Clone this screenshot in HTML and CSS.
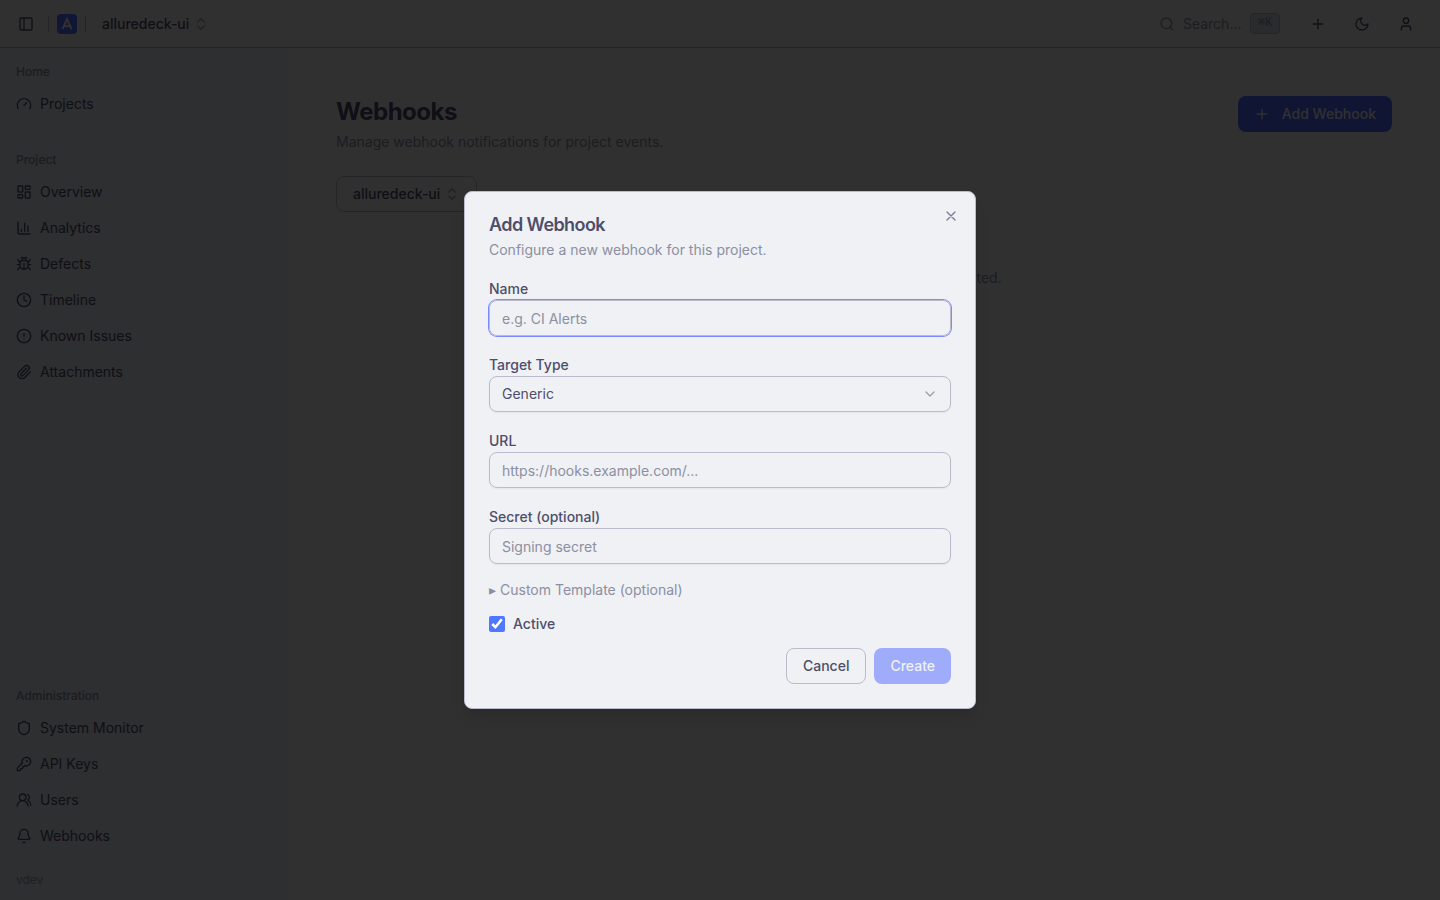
FILE: index.html
```html
<!DOCTYPE html>
<html lang="en">
<head>
<meta charset="utf-8">
<title>Webhooks</title>
<link rel="stylesheet" href="styles.css">
</head>
<body>
<div class="app">
  <header class="topbar">
    <div class="topbar-left">
      <svg class="icon" viewBox="0 0 24 24"><rect width="18" height="18" x="3" y="3" rx="2"/><path d="M9 3v18"/></svg>
      <span class="divider divider-first"></span>
      <span class="logo"><svg viewBox="0 0 20 20"><path d="M5.600 15 10 5l4.400 10M7 12h6"/></svg></span>
      <span class="divider"></span>
      <span class="project-name">alluredeck-ui</span>
      <svg class="icon faint" viewBox="0 0 24 24"><path d="m7 15 5 5 5-5M7 9l5-5 5 5"/></svg>
    </div>
    <div class="topbar-right">
      <div class="search">
        <svg class="icon" viewBox="0 0 24 24"><circle cx="11" cy="11" r="8"/><path d="m21 21-4.300-4.300"/></svg>
        <span>Search...</span><kbd>⌘K</kbd>
      </div>
      <svg class="icon action" viewBox="0 0 24 24"><path d="M5 12h14M12 5v14"/></svg>
      <svg class="icon action" viewBox="0 0 24 24"><path d="M12 3a6 6 0 0 0 9 9 9 9 0 1 1-9-9Z"/></svg>
      <svg class="icon action" viewBox="0 0 24 24"><path d="M19 21v-2a4 4 0 0 0-4-4H9a4 4 0 0 0-4 4v2"/><circle cx="12" cy="7" r="4"/></svg>
    </div>
  </header>
  <div class="body">
    <nav class="sidebar">
      <section class="group">
        <h2 class="group-label">Home</h2>
        <a class="nav-item"><svg class="icon" viewBox="0 0 24 24"><path d="m12 14 4-4M3.340 19a10 10 0 1 1 17.320 0"/></svg>Projects</a>
      </section>
      <section class="group">
        <h2 class="group-label">Project</h2>
        <a class="nav-item"><svg class="icon" viewBox="0 0 24 24"><rect width="7" height="9" x="3" y="3" rx="1"/><rect width="7" height="5" x="14" y="3" rx="1"/><rect width="7" height="9" x="14" y="12" rx="1"/><rect width="7" height="5" x="3" y="16" rx="1"/></svg>Overview</a>
        <a class="nav-item"><svg class="icon" viewBox="0 0 24 24"><path d="M3 3v16a2 2 0 0 0 2 2h16M18 17V9M13 17V5M8 17v-3"/></svg>Analytics</a>
        <a class="nav-item"><svg class="icon" viewBox="0 0 24 24"><path d="M12 20v-9M14 7a4 4 0 0 1 4 4v3a6 6 0 0 1-12 0v-3a4 4 0 0 1 4-4zM14.120 3.880 16 2M21 21a4 4 0 0 0-3.810-4M21 5a4 4 0 0 1-3.550 3.970M22 13h-4M3 21a4 4 0 0 1 3.810-4M3 5a4 4 0 0 0 3.550 3.970M6 13H2M8 2l1.880 1.880M9 7.130V6a3 3 0 1 1 6 0v1.130"/></svg>Defects</a>
        <a class="nav-item"><svg class="icon" viewBox="0 0 24 24"><circle cx="12" cy="12" r="10"/><path d="M12 6v6l4 2"/></svg>Timeline</a>
        <a class="nav-item"><svg class="icon" viewBox="0 0 24 24"><circle cx="12" cy="12" r="10"/><path d="M12 8v4M12 16h.01"/></svg>Known Issues</a>
        <a class="nav-item"><svg class="icon" viewBox="0 0 24 24"><path d="m16 6-8.414 8.586a2 2 0 0 0 2.829 2.829l8.414-8.586a4 4 0 1 0-5.657-5.657l-8.379 8.551a6 6 0 1 0 8.485 8.485l8.379-8.551"/></svg>Attachments</a>
      </section>
      <section class="group group-admin">
        <h2 class="group-label">Administration</h2>
        <a class="nav-item"><svg class="icon" viewBox="0 0 24 24"><path d="M20 13c0 5-3.500 7.500-7.660 8.950a1 1 0 0 1-.67-.01C7.500 20.500 4 18 4 13V6a1 1 0 0 1 1-1c2 0 4.500-1.200 6.240-2.720a1.170 1.170 0 0 1 1.520 0C14.510 3.810 17 5 19 5a1 1 0 0 1 1 1z"/></svg>System Monitor</a>
        <a class="nav-item"><svg class="icon" viewBox="0 0 24 24"><path d="M2.586 17.414A2 2 0 0 0 2 18.828V21a1 1 0 0 0 1 1h3a1 1 0 0 0 1-1v-1a1 1 0 0 1 1-1h1a1 1 0 0 0 1-1v-1a1 1 0 0 1 1-1h.172a2 2 0 0 0 1.414-.586l.814-.814a6.500 6.500 0 1 0-4-4z"/><circle cx="16.500" cy="7.500" r=".5"/></svg>API Keys</a>
        <a class="nav-item"><svg class="icon" viewBox="0 0 24 24"><path d="M18 21a8 8 0 0 0-16 0"/><circle cx="10" cy="8" r="5"/><path d="M22 20c0-3.370-2-6.500-4-8a5 5 0 0 0-.45-8.300"/></svg>Users</a>
        <a class="nav-item"><svg class="icon" viewBox="0 0 24 24"><path d="M10.268 21a2 2 0 0 0 3.464 0M3.262 15.326A1 1 0 0 0 4 17h16a1 1 0 0 0 .74-1.673C19.410 13.956 18 12.499 18 8A6 6 0 0 0 6 8c0 4.499-1.411 5.956-2.738 7.326"/></svg>Webhooks</a>
      </section>
      <footer class="version">vdev</footer>
    </nav>
    <main class="content">
      <div class="page-head">
        <div>
          <h1>Webhooks</h1>
          <p>Manage webhook notifications for project events.</p>
        </div>
        <button class="btn primary add"><svg class="icon" viewBox="0 0 24 24"><path d="M5 12h14M12 5v14"/></svg>Add Webhook</button>
      </div>
      <button class="btn outline picker">alluredeck-ui<svg class="icon faint" viewBox="0 0 24 24"><path d="m7 15 5 5 5-5M7 9l5-5 5 5"/></svg></button>
      <p class="empty">No webhooks yet. Add one to get started.</p>
    </main>
  </div>
</div>
<div class="overlay">
  <form class="dialog">
    <svg class="icon close" viewBox="0 0 24 24"><path d="M18 6 6 18M6 6l12 12"/></svg>
    <div class="dialog-head">
      <h2>Add Webhook</h2>
      <p>Configure a new webhook for this project.</p>
    </div>
    <div class="field"><label>Name</label><input class="control focused" placeholder="e.g. CI Alerts"></div>
    <div class="field"><label>Target Type</label><div class="control select">Generic<svg class="icon" viewBox="0 0 24 24"><path d="m6 9 6 6 6-6"/></svg></div></div>
    <div class="field"><label>URL</label><input class="control" placeholder="https://hooks.example.com/..."></div>
    <div class="field"><label>Secret (optional)</label><input class="control" placeholder="Signing secret"></div>
    <details class="template"><summary><span class="marker">▸</span>Custom Template (optional)</summary></details>
    <label class="active"><input type="checkbox" checked>Active</label>
    <div class="actions">
      <button type="button" class="btn outline">Cancel</button>
      <button type="button" class="btn primary disabled">Create</button>
    </div>
  </form>
</div>
</body>
</html>
```

FILE: styles.css
```css
* { box-sizing: border-box; }
body {
  margin: 0;
  height: 900px;
  overflow: hidden;
  background: #eff1f5;
  color: #4e4e6b;
  font: 14px/20px Inter, sans-serif;
}
h1, h2, p { margin: 0; }
button, input { font: inherit; color: inherit; }
.icon {
  width: 16px;
  height: 16px;
  flex: none;
  fill: none;
  stroke: currentColor;
  stroke-width: 2;
  stroke-linecap: round;
  stroke-linejoin: round;
}
.faint { opacity: .5; }
.app { height: 900px; display: flex; flex-direction: column; }

.topbar {
  height: 48px;
  display: flex;
  align-items: center;
  justify-content: space-between;
  border-bottom: 1px solid #bbbbcd;
  padding: 0 26px 0 18px;
}
.topbar-left, .topbar-right, .search { display: flex; align-items: center; }
.divider { width: 1px; height: 16px; background: #bbbbcd; }
.divider-first { margin: 0 8px 0 14px; }
.logo { width: 20px; height: 20px; border-radius: 4px; background: #4f70ff; margin-right: 8px; }
.logo svg { display: block; fill: none; stroke: #eff1f5; stroke-width: 2; }
.project-name { font-weight: 500; margin: 0 4px 0 16px; }
.search { color: #8c8fa1; gap: 8px; margin-right: 30px; }
.search span { margin-right: .5px; }
kbd {
  height: 21px;
  width: 30px;
  border: 1px solid #bbbbcd;
  border-radius: 4px;
  background: #d2d7df;
  font: 500 12px/19px "Liberation Mono", monospace;
  text-align: center;
}
.action { margin-left: 28px; }
.search + .action { margin-left: 0; }

.body { flex: 1; display: flex; }
.sidebar {
  width: 288px;
  background: #e1e8f0;
  display: flex;
  flex-direction: column;
}
.group { padding: 8px 8px 16px; }
.group-admin { margin-top: auto; padding-bottom: 8px; }
.group-label {
  height: 32px;
  padding: 0 8px;
  color: #8c8fa1;
  font-size: 12px;
  line-height: 32px;
  font-weight: 500;
}
.nav-item {
  height: 32px;
  padding: 0 8px;
  display: flex;
  align-items: center;
  gap: 8px;
}
.nav-item + .nav-item { margin-top: 4px; }
.version { padding: 12px 16px; height: 40px; font-size: 12px; line-height: 16px; color: #9ca0b0; }

.content { flex: 1; padding: 48px; }
.page-head { display: flex; justify-content: space-between; align-items: flex-start; }
h1 { font-size: 24px; line-height: 32px; letter-spacing: -.5px; }
.page-head p { color: #8c8fa1; margin-top: 4px; }
.btn {
  height: 36px;
  padding: 0 16px;
  border-radius: 8px;
  border: 0;
  display: flex;
  align-items: center;
  font-weight: 500;
}
.primary { background: #4f69ff; color: #eff1f5; }
.outline { background: #eff1f5; border: 1px solid #bbbbcd; }
.add .icon { margin-right: 12px; }
.picker { margin-top: 24px; gap: 4px; }
.empty { text-align: center; margin-top: 56px; color: #8c8fa1; }

.overlay {
  position: absolute;
  inset: 0;
  display: grid;
  place-items: center;
  background: rgba(0, 0, 0, .8);
}
.dialog {
  position: relative;
  width: 512px;
  height: 518px;
  padding: 24px;
  border: 1px solid #bbbbcd;
  border-radius: 8px;
  background: #eff1f5;
  box-shadow: 0 10px 15px -3px rgba(0, 0, 0, .1), 0 4px 6px -4px rgba(0, 0, 0, .1);
}
.close { position: absolute; top: 16px; right: 16px; opacity: .7; }
.dialog-head { margin-bottom: 18px; }
.dialog-head h2 { font-size: 18px; line-height: 18px; letter-spacing: -.58px; font-weight: 600; }
.dialog-head p { margin-top: 6px; color: #8c8fa1; }
.field { margin-bottom: 18px; }
.field label { display: block; font-weight: 500; line-height: 22px; }
.control {
  display: flex;
  width: 100%;
  height: 36px;
  padding: 1px 12px;
  border: 1px solid #bbbbcd;
  border-radius: 8px;
  background: transparent;
  box-shadow: 0 1px 2px rgba(0, 0, 0, .05);
  outline: 0;
}
.control::placeholder { color: #8c8fa1; opacity: 1; }
.focused { box-shadow: 0 0 0 1px #7b8aff; }
.select { align-items: center; justify-content: space-between; padding: 0 12px; }
.select .icon { opacity: .5; }
.template { color: #8c8fa1; margin-top: -2px; }
.template summary { display: flex; list-style: none; }
.marker { width: 11px; flex: none; }
.active { display: flex; align-items: center; gap: 8px; margin: 14px 0; font-weight: 500; }
.active input { width: 16px; height: 16px; margin: 0; accent-color: #4f78ff; }
.actions { display: flex; justify-content: flex-end; gap: 8px; }
.disabled { opacity: .5; }
```
